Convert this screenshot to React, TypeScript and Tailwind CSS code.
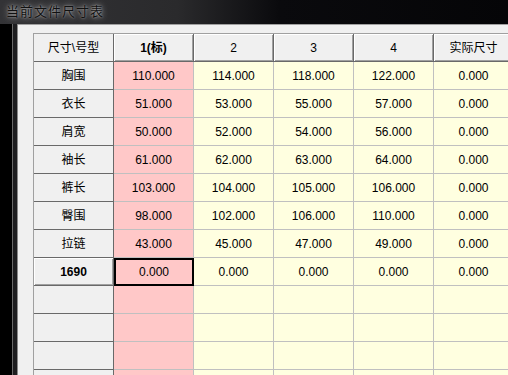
import { Fragment } from "react";

const rows = [
  { name: "胸围", vals: ["110.000", "114.000", "118.000", "122.000", "0.000"] },
  { name: "衣长", vals: ["51.000", "53.000", "55.000", "57.000", "0.000"] },
  { name: "肩宽", vals: ["50.000", "52.000", "54.000", "56.000", "0.000"] },
  { name: "袖长", vals: ["61.000", "62.000", "63.000", "64.000", "0.000"] },
  { name: "裤长", vals: ["103.000", "104.000", "105.000", "106.000", "0.000"] },
  { name: "臀围", vals: ["98.000", "102.000", "106.000", "110.000", "0.000"] },
  { name: "拉链", vals: ["43.000", "45.000", "47.000", "49.000", "0.000"] },
];

const headers = ["2", "3", "4", "实际尺寸"];

const font = "font-['Liberation_Sans','Noto_Sans_CJK_SC',sans-serif]";

const raised =
  "bg-[#f0f0f0] border-r border-b border-[#696969] shadow-[inset_1px_1px_0_#ffffff,inset_-1px_-1px_0_#a0a0a0]";
const rowHead = "bg-[#f0f0f0] border-r border-b border-[#696969]";
const pink = "bg-[#ffc8c8] border-r border-b border-[#c0c0c0]";
const yellow = "bg-[#ffffe0] border-r border-b border-[#c0c0c0]";

const Cell = ({ cls, children }: { cls: string; children?: React.ReactNode }) => (
  <div className={`${cls} h-[28px] flex items-center justify-center text-[12px] text-black`}>{children}</div>
);

const App = () => {
  return (
    <div className={`${font} w-[508px] h-[375px] overflow-hidden bg-black flex flex-col`}>
      <div className="h-[24px] shrink-0 bg-[linear-gradient(90deg,#333336_0%,#2a2a2c_35%,#0a0a0d_55%,#050507_100%)] flex items-center pl-[6px]">
        <span className="text-[13px] tracking-[1px] text-[#111] [text-shadow:0_0_6px_rgba(255,255,255,0.75),0_0_2px_rgba(255,255,255,0.5)]">
          当前文件尺寸表
        </span>
      </div>
      <div className="flex flex-1 min-h-0">
        <div className="w-[12px] shrink-0 bg-black" />
        <div className="w-[1px] shrink-0 bg-[#6a6a6a]" />
        <div className="w-[4px] shrink-0 bg-[#1e1e20]" />
        <div className="w-[1px] shrink-0 bg-[#8a8a8a]" />
        <div className="flex-1 min-w-0 border-t border-[#a0a0a0] bg-[#f0f0f0] pl-[15px] pt-[8px]">
          <div className="w-[600px] border-l border-t border-[#a0a0a0] grid grid-cols-[80px_80px_80px_80px_80px_80px_80px]">
            <Cell cls={rowHead}>尺寸\号型</Cell>
            <Cell cls={`${raised} font-bold`}>1(标)</Cell>
            {headers.map((h) => (
              <Cell key={h} cls={raised}>{h}</Cell>
            ))}
            <Cell cls={raised} />

            {rows.map((r) => (
              <Fragment key={r.name}>
                <Cell cls={rowHead}>{r.name}</Cell>
                <Cell cls={pink}>{r.vals[0]}</Cell>
                {r.vals.slice(1).map((v, i) => (
                  <Cell key={i} cls={yellow}>{v}</Cell>
                ))}
                <Cell cls={yellow} />
              </Fragment>
            ))}

            <Cell cls={`${raised} font-bold`}>1690</Cell>
            <Cell cls="bg-[#ffc8c8] border-2 border-black">0.000</Cell>
            {["0.000", "0.000", "0.000", "0.000"].map((v, i) => (
              <Cell key={i} cls={yellow}>{v}</Cell>
            ))}
            <Cell cls={yellow} />

            {[0, 1, 2, 3].map((k) => (
              <Fragment key={k}>
                <Cell cls={rowHead} />
                <Cell cls={pink} />
                <Cell cls={yellow} />
                <Cell cls={yellow} />
                <Cell cls={yellow} />
                <Cell cls={yellow} />
                <Cell cls={yellow} />
              </Fragment>
            ))}
          </div>
        </div>
      </div>
    </div>
  );
};

export default App;
